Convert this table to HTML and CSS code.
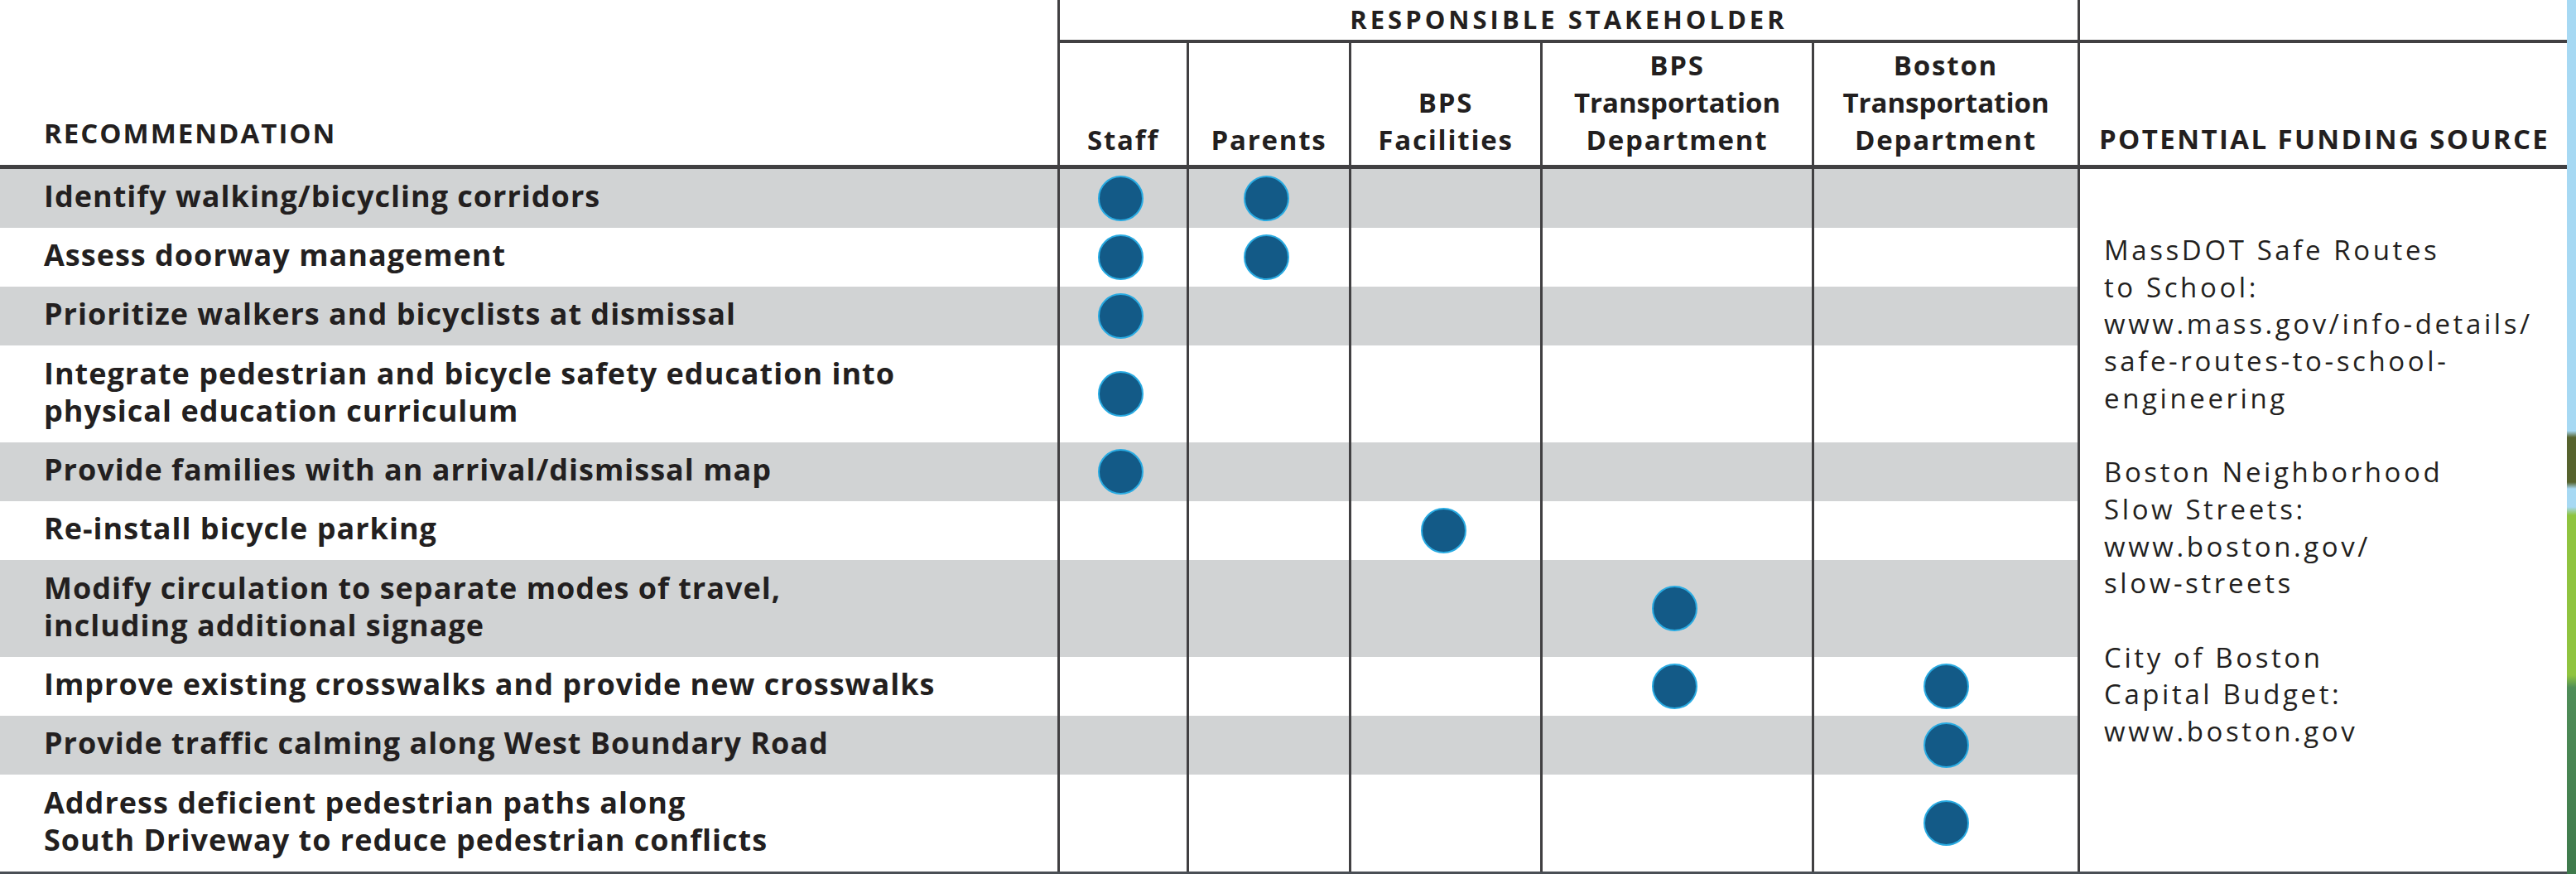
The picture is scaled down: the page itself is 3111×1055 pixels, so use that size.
FILE: index.html
```html
<!DOCTYPE html>
<html lang="en">
<head>
<meta charset="utf-8">
<title>Recommendations and Responsible Stakeholders</title>
<link rel="stylesheet" href="styles.css">
</head>
<body>
<div class="page">
  <div class="table">
    <div class="head">
      <div class="h-rec">RECOMMENDATION</div>
      <div class="h-group">RESPONSIBLE STAKEHOLDER</div>
      <div class="h-blank"></div>
      <div class="h-col"><div class="h-text">Staff</div></div>
      <div class="h-col"><div class="h-text">Parents</div></div>
      <div class="h-col"><div class="h-text">BPS<br>Facilities</div></div>
      <div class="h-col"><div class="h-text">BPS<br><span class="tight">Transportation</span><br>Department</div></div>
      <div class="h-col"><div class="h-text">Boston<br><span class="tight">Transportation</span><br>Department</div></div>
      <div class="h-fund">POTENTIAL FUNDING SOURCE</div>
    </div>
    <div class="body">
      <div class="rows">
        <div class="row alt">
          <div class="rec">Identify walking/bicycling corridors</div>
          <div class="cell"><span class="dot"></span></div>
          <div class="cell"><span class="dot"></span></div>
          <div class="cell"></div>
          <div class="cell"></div>
          <div class="cell"></div>
        </div>
        <div class="row">
          <div class="rec">Assess doorway management</div>
          <div class="cell"><span class="dot"></span></div>
          <div class="cell"><span class="dot"></span></div>
          <div class="cell"></div>
          <div class="cell"></div>
          <div class="cell"></div>
        </div>
        <div class="row alt">
          <div class="rec">Prioritize walkers and bicyclists at dismissal</div>
          <div class="cell"><span class="dot"></span></div>
          <div class="cell"></div>
          <div class="cell"></div>
          <div class="cell"></div>
          <div class="cell"></div>
        </div>
        <div class="row tall">
          <div class="rec">Integrate pedestrian and bicycle safety education into<br>physical education curriculum</div>
          <div class="cell"><span class="dot"></span></div>
          <div class="cell"></div>
          <div class="cell"></div>
          <div class="cell"></div>
          <div class="cell"></div>
        </div>
        <div class="row alt">
          <div class="rec">Provide families with an arrival/dismissal map</div>
          <div class="cell"><span class="dot"></span></div>
          <div class="cell"></div>
          <div class="cell"></div>
          <div class="cell"></div>
          <div class="cell"></div>
        </div>
        <div class="row">
          <div class="rec">Re-install bicycle parking</div>
          <div class="cell"></div>
          <div class="cell"></div>
          <div class="cell"><span class="dot"></span></div>
          <div class="cell"></div>
          <div class="cell"></div>
        </div>
        <div class="row alt tall">
          <div class="rec">Modify circulation to separate modes of travel,<br>including additional signage</div>
          <div class="cell"></div>
          <div class="cell"></div>
          <div class="cell"></div>
          <div class="cell"><span class="dot"></span></div>
          <div class="cell"></div>
        </div>
        <div class="row">
          <div class="rec">Improve existing crosswalks and provide new crosswalks</div>
          <div class="cell"></div>
          <div class="cell"></div>
          <div class="cell"></div>
          <div class="cell"><span class="dot"></span></div>
          <div class="cell"><span class="dot"></span></div>
        </div>
        <div class="row alt">
          <div class="rec">Provide traffic calming along West Boundary Road</div>
          <div class="cell"></div>
          <div class="cell"></div>
          <div class="cell"></div>
          <div class="cell"></div>
          <div class="cell"><span class="dot"></span></div>
        </div>
        <div class="row tall">
          <div class="rec">Address deficient pedestrian paths along<br>South Driveway to reduce pedestrian conflicts</div>
          <div class="cell"></div>
          <div class="cell"></div>
          <div class="cell"></div>
          <div class="cell"></div>
          <div class="cell"><span class="dot"></span></div>
        </div>
      </div>
      <div class="funding">
        <p>MassDOT Safe Routes<br>to School:<br>www.mass.gov/info-details/<br>safe-routes-to-school-<br>engineering</p>
        <p>Boston Neighborhood<br>Slow Streets:<br>www.boston.gov/<br>slow-streets</p>
        <p>City of Boston<br>Capital Budget:<br>www.boston.gov</p>
      </div>
    </div>
  </div>
  <div class="strip"></div>
</div>
</body>
</html>
```

FILE: styles.css
```css
* { box-sizing: border-box; }

html, body {
  margin: 0;
  padding: 0;
  background: #ffffff;
}

body {
  font-family: "Open Sans", "Noto Sans", "Liberation Sans", sans-serif;
  color: #231f20;
}

.page {
  display: flex;
  width: 3111px;
  height: 1055px;
  overflow: hidden;
}

.table {
  width: 3100px;
  display: flex;
  flex-direction: column;
  border-bottom: 3px solid #4a4f55;
}

/* ---------- header ---------- */
.head {
  display: grid;
  grid-template-columns: 1277px 156px 196px 231px 328px 321px 591px;
  grid-template-rows: 52px 152px;
  font-weight: 700;
}

.h-rec {
  grid-row: 1 / 3;
  grid-column: 1;
  display: flex;
  align-items: flex-end;
  padding: 0 0 16px 53px;
  font-size: 33px;
  line-height: 45px;
  letter-spacing: 2px;
  border-bottom: 5px solid #414042;
}

.h-group {
  grid-row: 1;
  grid-column: 2 / 7;
  border-left: 3px solid #414042;
  border-bottom: 4px solid #414042;
  text-align: center;
  font-size: 31px;
  line-height: 44px;
  padding-top: 1px;
  letter-spacing: 4px;
}

.h-blank {
  grid-row: 1;
  grid-column: 7;
  border-left: 3px solid #414042;
  border-bottom: 4px solid #414042;
}

.h-col {
  grid-row: 2;
  display: flex;
  flex-direction: column;
  justify-content: flex-end;
  align-items: center;
  border-left: 3px solid #414042;
  border-bottom: 5px solid #414042;
  padding-bottom: 8px;
  font-size: 33px;
  line-height: 45px;
  letter-spacing: 1.8px;
}

.h-text {
  text-align: center;
  white-space: nowrap;
}

.tight {
  letter-spacing: 0;
}

.h-fund {
  grid-row: 2;
  grid-column: 7;
  display: flex;
  align-items: flex-end;
  border-left: 3px solid #414042;
  border-bottom: 5px solid #414042;
  padding: 0 0 9px 23px;
  font-size: 33px;
  line-height: 45px;
  letter-spacing: 2.4px;
  white-space: nowrap;
}

/* ---------- body ---------- */
.body {
  flex: 1;
  display: flex;
}

.rows {
  width: 2509px;
  display: flex;
  flex-direction: column;
}

.row {
  display: grid;
  grid-template-columns: 1277px 156px 196px 231px 328px 321px;
  min-height: 71px;
}

.row.tall {
  min-height: 117px;
}

.row.alt {
  background: #d1d3d4;
}

.rec {
  display: flex;
  align-items: center;
  padding: 10px 0 16px 53px;
  font-size: 36px;
  font-weight: 700;
  line-height: 45px;
  letter-spacing: 1px;
  white-space: nowrap;
}

.cell {
  display: flex;
  align-items: center;
  justify-content: center;
  border-left: 3px solid #414042;
}

.cell:not(:last-child) {
  padding-right: 6px;
}

.dot {
  width: 55px;
  height: 55px;
  border-radius: 50%;
  background: #135a87;
  border: 2px solid #29abe2;
}

.funding {
  width: 591px;
  border-left: 3px solid #414042;
  padding: 76px 0 0 29px;
  font-size: 33px;
  line-height: 44.7px;
  letter-spacing: 3.6px;
  white-space: nowrap;
}

.funding p {
  margin: 0 0 44.7px 0;
}

/* ---------- illustration edge ---------- */
.strip {
  flex: 1;
  background: linear-gradient(to bottom,
    #a7d9f3 0, #a7d9f3 520px,
    #56632e 528px, #56632e 582px,
    #a7d9f3 590px, #a7d9f3 612px,
    #8fc43f 622px, #8fc43f 815px,
    #4f8d58 830px, #3e7a4c 1055px);
}
```
